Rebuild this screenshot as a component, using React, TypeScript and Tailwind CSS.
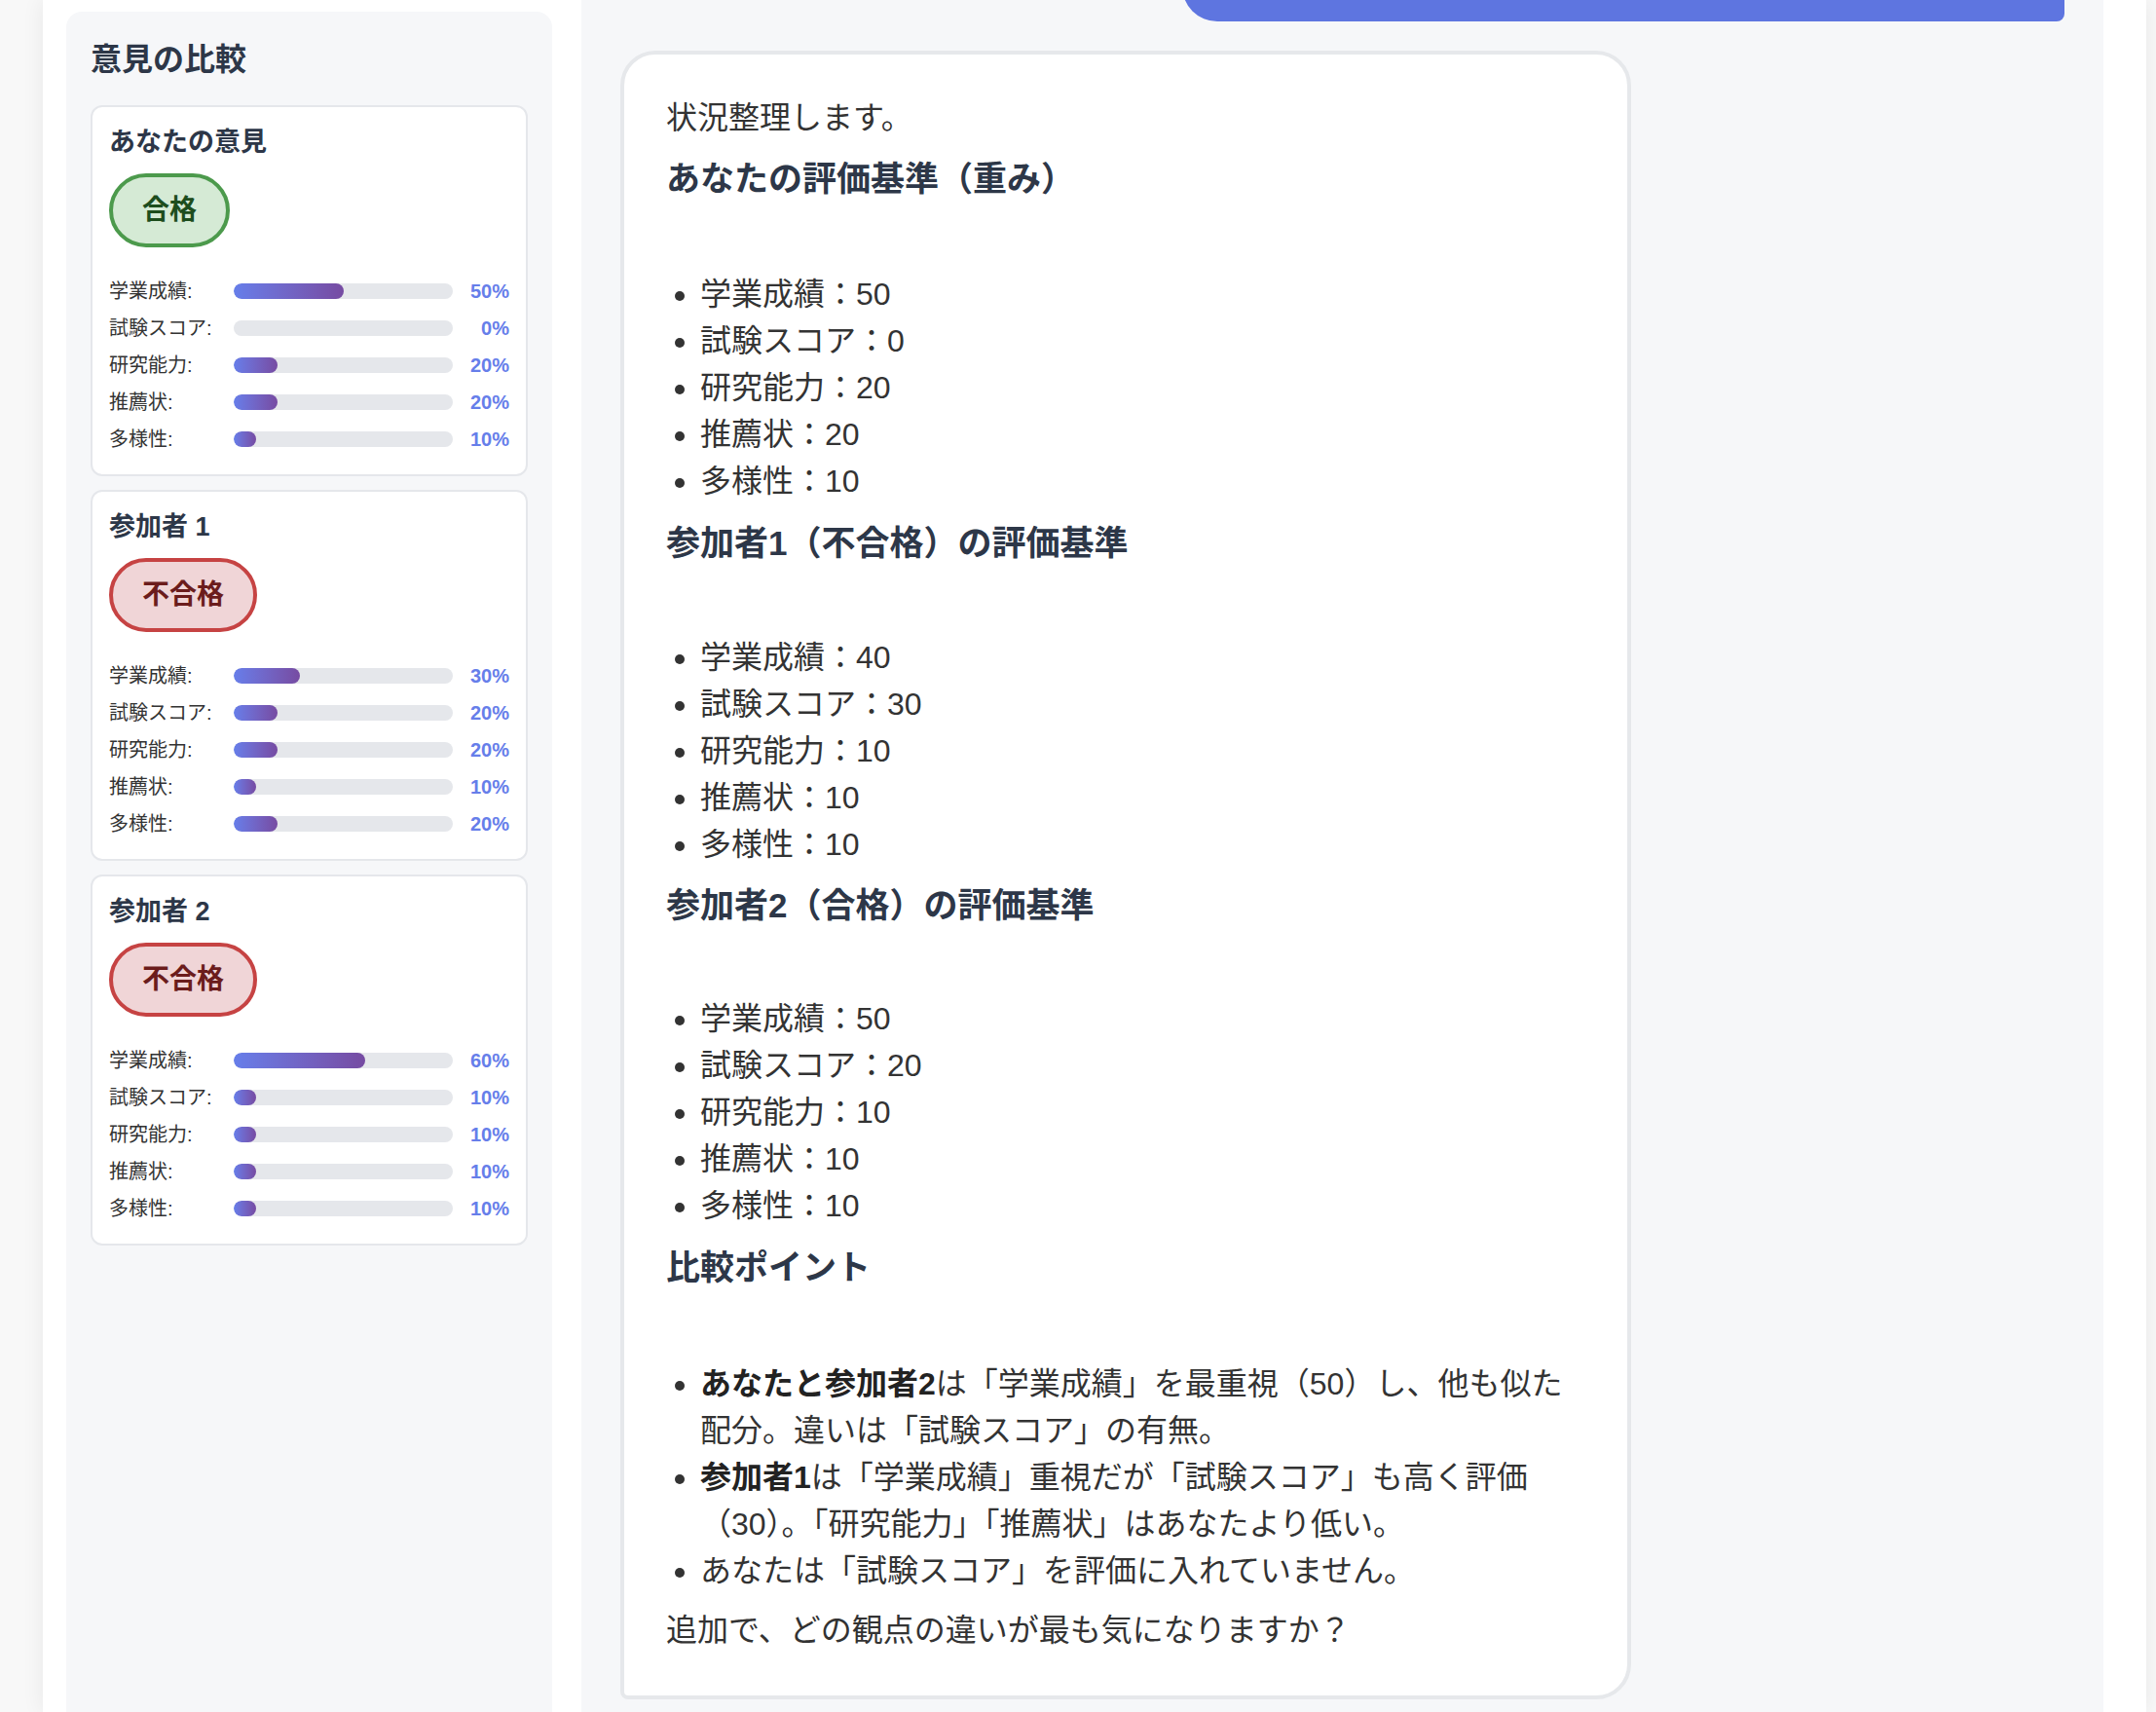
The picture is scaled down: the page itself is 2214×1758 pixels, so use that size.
const FONT = "font-['Liberation_Sans','Noto_Sans_CJK_JP',sans-serif]";

const LABELS = ["学業成績", "試験スコア", "研究能力", "推薦状", "多様性"];

const OPINIONS = [
  { title: "あなたの意見", pass: true, values: [50, 0, 20, 20, 10] },
  { title: "参加者 1", pass: false, values: [30, 20, 20, 10, 20] },
  { title: "参加者 2", pass: false, values: [60, 10, 10, 10, 10] },
];

function Verdict({ pass }: { pass: boolean }) {
  return pass ? (
    <span className="self-start rounded-full border-[4px] border-[#4c9a4c] bg-[#d5ead5] px-[30px] py-[13px] text-[28px] leading-[42px] font-bold text-[#1d4d1d]">
      合格
    </span>
  ) : (
    <span className="self-start rounded-full border-[4px] border-[#c64343] bg-[#f0d5d7] px-[30px] py-[13px] text-[28px] leading-[42px] font-bold text-[#6b1c1c]">
      不合格
    </span>
  );
}

function WeightRow({ label, value }: { label: string; value: number }) {
  return (
    <div className="flex h-[30px] items-center">
      <span className="w-[128px] shrink-0 text-[20px] text-[#333]">{label}:</span>
      <div className="h-[16px] flex-1 overflow-hidden rounded-full bg-[#e5e7eb]">
        {value > 0 && (
          <div
            className="h-full rounded-full bg-linear-to-r from-[#667eea] to-[#764ba2]"
            style={{ width: `${value}%` }}
          />
        )}
      </div>
      <span className="w-[58px] shrink-0 text-right text-[20px] font-bold text-[#667eea]">{value}%</span>
    </div>
  );
}

function OpinionCard({ title, pass, values }: { title: string; pass: boolean; values: number[] }) {
  return (
    <div className="flex flex-col rounded-[12px] border-2 border-[#e5e7eb] bg-white px-[17px] pt-[17px] pb-[21px]">
      <h4 className="text-[27px] leading-[38px] font-bold text-[#2d3748]">{title}</h4>
      <div className="mt-[13px] flex">
        <Verdict pass={pass} />
      </div>
      <div className="mt-[30px] flex flex-col gap-[8px]">
        {LABELS.map((l, i) => (
          <WeightRow key={l} label={l} value={values[i]} />
        ))}
      </div>
    </div>
  );
}

const CRITERIA = [
  {
    heading: "あなたの評価基準（重み）",
    items: ["学業成績：50", "試験スコア：0", "研究能力：20", "推薦状：20", "多様性：10"],
    headMt: "mt-[15px]",
    listMt: "mt-[70px]",
  },
  {
    heading: "参加者1（不合格）の評価基準",
    items: ["学業成績：40", "試験スコア：30", "研究能力：10", "推薦状：10", "多様性：10"],
    headMt: "mt-[16px]",
    listMt: "mt-[69px]",
  },
  {
    heading: "参加者2（合格）の評価基準",
    items: ["学業成績：50", "試験スコア：20", "研究能力：10", "推薦状：10", "多様性：10"],
    headMt: "mt-[15px]",
    listMt: "mt-[68px]",
  },
];

export default function App() {
  return (
    <div className={`h-screen overflow-hidden bg-[#f8f8f8] ${FONT}`}>
      <div className="ml-[44px] flex h-[1758px] w-[2160px] gap-[30px] bg-white pr-[44px] pl-[24px] shadow-[0_0_22px_rgba(0,0,0,0.07)]">
        {/* sidebar: opinion comparison */}
        <aside className="mt-[12px] flex w-[499px] shrink-0 flex-col rounded-t-[16px] bg-[#f6f7f9] px-[25px] pt-[25px]">
          <h3 className="text-[32px] leading-[48px] font-bold text-[#2d3748]">意見の比較</h3>
          <div className="mt-[23px] flex flex-col gap-[14px]">
            {OPINIONS.map((o) => (
              <OpinionCard key={o.title} {...o} />
            ))}
          </div>
        </aside>

        {/* chat */}
        <main className="flex flex-1 flex-col overflow-hidden bg-[#f6f7f9] px-[40px]">
          <div className="-mt-[58px] flex justify-end">
            <div className="h-[80px] w-[906px] rounded-[36px] rounded-br-[8px] bg-[#5e75e0]" />
          </div>

          <div className="mt-[30px] w-[70%] rounded-[36px] rounded-bl-[8px] border-[4px] border-[#e6e8eb] bg-white px-[43px] pt-[41px] pb-[43px] text-[32px] leading-[48px] text-[#333]">
            <p>状況整理します。</p>

            {CRITERIA.map((c) => (
              <div key={c.heading}>
                <h3 className={`${c.headMt} text-[35px] leading-[48px] font-bold text-[#2d3748]`}>{c.heading}</h3>
                <ul className={`${c.listMt} list-disc pl-[35px]`}>
                  {c.items.map((it) => (
                    <li key={it}>{it}</li>
                  ))}
                </ul>
              </div>
            ))}

            <h3 className="mt-[16px] text-[35px] leading-[48px] font-bold text-[#2d3748]">比較ポイント</h3>
            <ul className="mt-[71px] list-disc pl-[35px]">
              <li>
                <strong className="font-bold text-[#222]">あなたと参加者2</strong>は「学業成績」を最重視（50）し、他も似た配分。違いは「試験スコア」の有無。
              </li>
              <li>
                <strong className="font-bold text-[#222]">参加者1</strong>は「学業成績」重視だが「試験スコア」も高く評価（30）。「研究能力」「推薦状」はあなたより低い。
              </li>
              <li>あなたは「試験スコア」を評価に入れていません。</li>
            </ul>
            <p className="mt-[13px]">追加で、どの観点の違いが最も気になりますか？</p>
          </div>
        </main>
      </div>
    </div>
  );
}
